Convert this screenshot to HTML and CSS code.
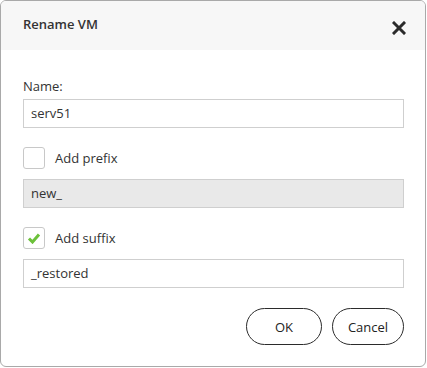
FILE: index.html
```html
<!DOCTYPE html>
<html>
<head>
<meta charset="utf-8">
<link rel="stylesheet" href="styles.css">
</head>
<body>
<div class="dialog">
  <div class="header">
    <span class="title">Rename VM</span>
    <svg class="close" width="14" height="14" viewBox="0 0 14 14"><path d="M2 2 L12 12 M12 2 L2 12" stroke="#2b2b2b" stroke-width="3" stroke-linecap="square"/></svg>
  </div>
  <div class="content">
    <div class="label">Name:</div>
    <div class="input">serv51</div>
    <div class="check-row">
      <span class="box"></span>
      <span class="check-label">Add prefix</span>
    </div>
    <div class="input disabled">new_</div>
    <div class="check-row">
      <span class="box"><svg width="14" height="12" viewBox="0 0 14 12"><path d="M2 6.5 L5.5 10 L12 2.5" fill="none" stroke="#6cc13a" stroke-width="3"/></svg></span>
      <span class="check-label">Add suffix</span>
    </div>
    <div class="input">_restored</div>
    <div class="buttons">
      <button class="btn">OK</button>
      <button class="btn">Cancel</button>
    </div>
  </div>
</div>
</body>
</html>
```
FILE: styles.css
```css
html, body {
  margin: 0;
  padding: 0;
  background: #ffffff;
}
body {
  font-family: "Open Sans", "Noto Sans", sans-serif;
  font-size: 13px;
  color: #333333;
}
.dialog {
  box-sizing: border-box;
  width: 426px;
  height: 367px;
  border: 1px solid #a9a9a9;
  border-radius: 6px;
  overflow: hidden;
  background: #ffffff;
}
.header {
  height: 49px;
  background: #f7f7f7;
  display: flex;
  align-items: center;
  justify-content: space-between;
  padding: 0 19px 0 22px;
}
.title {
  font-size: 13px;
  font-weight: 600;
  color: #333;
  margin-top: -4px;
}
.close {
  margin-top: 4px;
}
.content {
  padding: 28px 21px 0 22px;
  display: flex;
  flex-direction: column;
}
.label {
  line-height: 16px;
  margin-bottom: 5px;
}
.input {
  box-sizing: border-box;
  height: 29px;
  border: 1px solid #cfcfcf;
  padding: 0 7px;
  line-height: 27px;
  color: #333;
}
.input.disabled {
  background: #e9e9e9;
}
.check-row {
  display: flex;
  align-items: center;
  margin: 19px 0 10px;
  height: 22px;
}
.box {
  box-sizing: border-box;
  width: 22px;
  height: 22px;
  border: 1px solid #c8c8c8;
  border-radius: 3px;
  display: flex;
  align-items: center;
  justify-content: center;
  margin-right: 10px;
}
.check-label {
  color: #333;
}
.buttons {
  display: flex;
  justify-content: flex-end;
  gap: 10px;
  margin-top: 20px;
}
.btn {
  box-sizing: border-box;
  height: 37px;
  min-width: 72px;
  padding: 0 13px;
  border: 1px solid #2b2b2b;
  border-radius: 19px;
  background: #fff;
  font-family: "Open Sans", "Noto Sans", sans-serif;
  font-size: 13px;
  color: #222;
}
.btn:first-child {
  width: 76px;
}
```
